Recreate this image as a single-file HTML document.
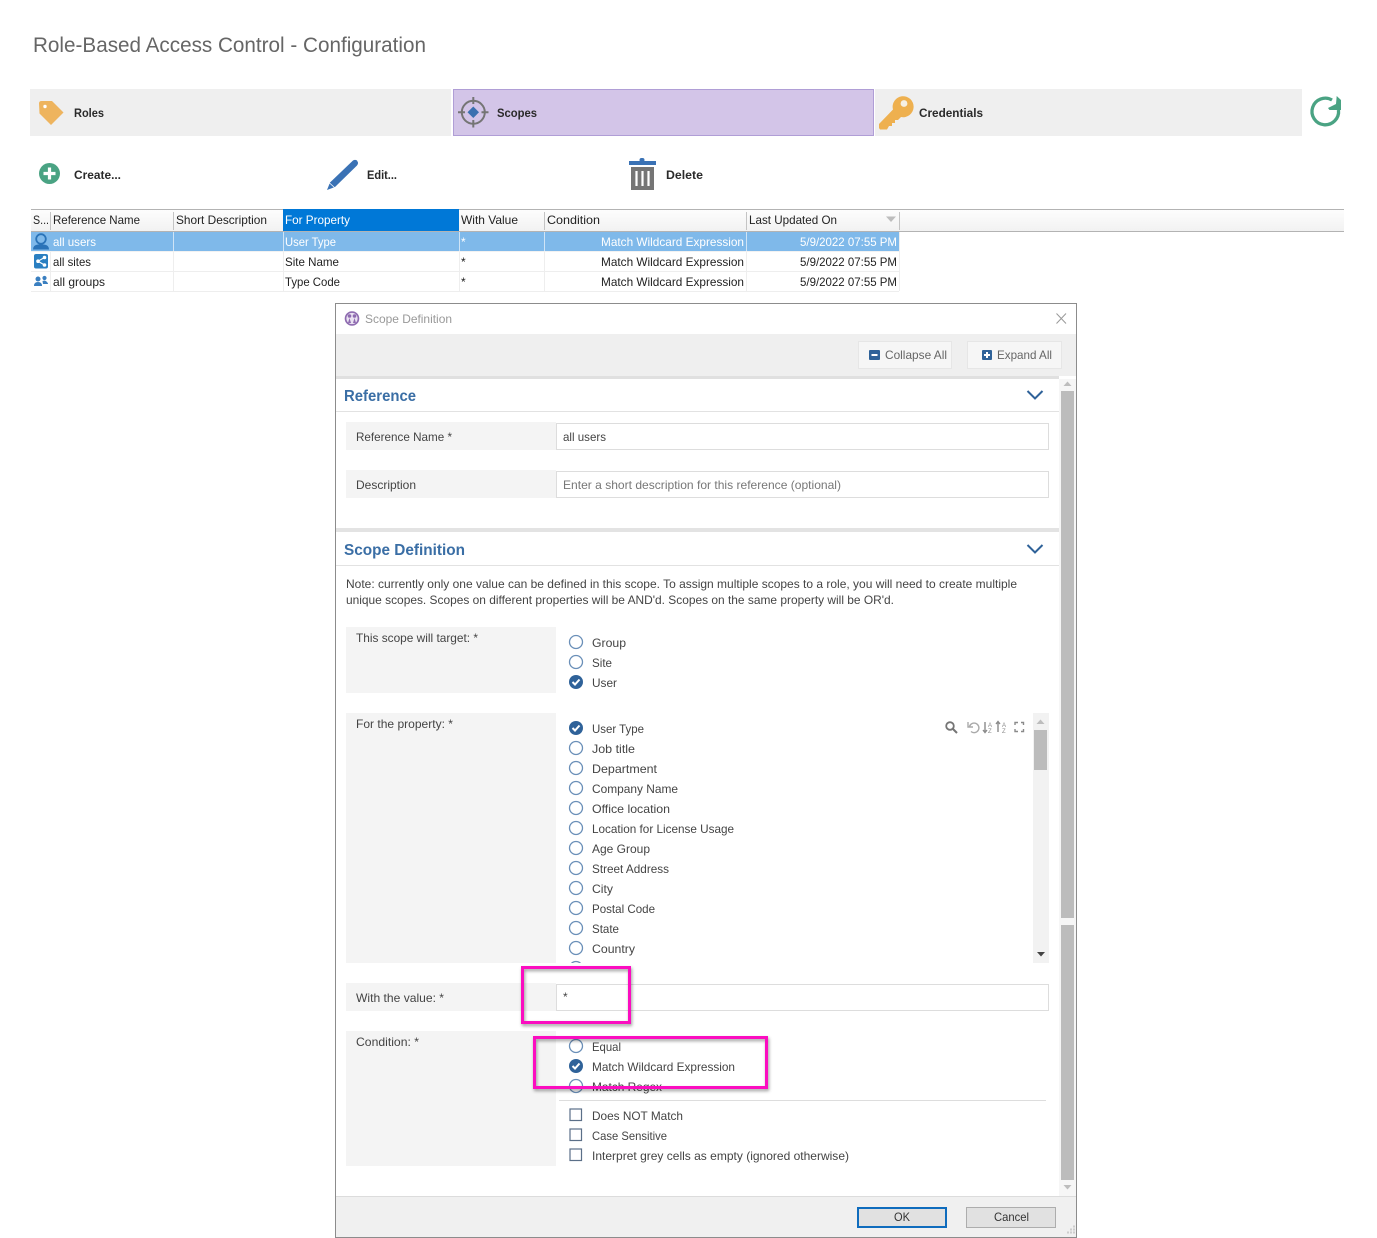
<!DOCTYPE html>
<html><head><meta charset="utf-8"><title>Role-Based Access Control - Configuration</title>
<style>
html,body{margin:0;padding:0;background:#fff;width:1377px;height:1238px;overflow:hidden}
svg{display:block}
text{font-family:"Liberation Sans",sans-serif;font-size:12px;fill:#444;white-space:pre}
.t{fill:#222}
.w{fill:#fff}
.b{font-weight:bold;fill:#2a2a2a;font-size:12px}
.h{font-size:16px;font-weight:bold;fill:#3a6ea5}
.r{fill:none;stroke:#6a8fb8;stroke-width:1.3}
.c{fill:#2f6299}
.k{fill:none;stroke:#fff;stroke-width:2}
.x{fill:none;stroke:#5b6f88;stroke-width:1.2}
.g{fill:none;stroke:#8a8a8a;stroke-width:1.4}
</style></head><body>
<svg width="1377" height="1238" viewBox="0 0 1377 1238" xmlns="http://www.w3.org/2000/svg">
<defs>
<linearGradient id="hd" x1="0" y1="0" x2="0" y2="1"><stop offset="0" stop-color="#fdfdfd"/><stop offset="1" stop-color="#f2f2f2"/></linearGradient>
<filter id="sh" x="-10%" y="-10%" width="120%" height="125%"><feDropShadow dx="1" dy="2" stdDeviation="1.6" flood-color="#000" flood-opacity=".4"/></filter>
<clipPath id="pl"><rect x="560" y="713" width="300" height="250"/></clipPath>
</defs>

<text x="33" y="52" textLength="393" lengthAdjust="spacingAndGlyphs" style="font-size:21.5px;fill:#666">Role-Based Access Control - Configuration</text>

<!-- tabs -->
<rect x="30" y="89" width="421" height="47" fill="#efefef"/>
<rect x="453.500" y="89.500" width="420" height="46" fill="#d3c5e8" stroke="#b09ed6"/>
<rect x="875" y="89" width="427" height="47" fill="#efefef"/>
<path d="M39 103.500Q39 101 41.500 101H52L63.500 112.500 51 125 39.500 113.500Z" fill="#eeb45e"/><circle cx="45" cy="106.500" r="1.700" fill="#fff"/>
<text class="b" x="74" y="117" textLength="30" lengthAdjust="spacingAndGlyphs">Roles</text>
<circle cx="473.300" cy="112.300" r="11.500" fill="none" stroke="#757575" stroke-width="2"/>
<path d="M473.300 97V104M473.300 120V127.500M458 112.300H465M481.500 112.300H488.500" stroke="#757575" stroke-width="2" fill="none"/>
<path d="M473.300 106.500L479 112.300 473.300 118 467.500 112.300Z" fill="#3a70b0"/>
<text class="b" x="497" y="117" textLength="40" lengthAdjust="spacingAndGlyphs">Scopes</text>
<path d="M879 128V124L893 109.500A10.500 10.500 0 1 1 901 117L898 120H895V123H892V126H889L887 129.500H880Z" fill="#eeb04f"/><circle cx="904" cy="103.500" r="3.400" fill="#f6f0e4"/>
<text class="b" x="919" y="117" textLength="64" lengthAdjust="spacingAndGlyphs">Credentials</text>
<path d="M1338.500 110A13.300 13.300 0 1 1 1332 100" fill="none" stroke="#4aa383" stroke-width="3.300"/>
<path d="M1336.700 96L1341 100V110H1329.500L1328 108 1336 104Z" fill="#4aa383"/>

<!-- actions -->
<circle cx="49.500" cy="173.500" r="10.500" fill="#4aa383"/><path d="M49.500 167.500V179.500M43.500 173.500H55.500" stroke="#fff" stroke-width="3.200"/>
<text class="b" x="74" y="179" textLength="47" lengthAdjust="spacingAndGlyphs">Create...</text>
<path d="M327 190L330 182.500 353 160.500Q355 159.300 357 160.500L358 162.500Q358.300 164 357 165.500L335 187Z" fill="#3a72b5"/><path d="M329.500 183L334.500 187.500" stroke="#fff" stroke-width=".8"/>
<text class="b" x="367" y="179" textLength="30" lengthAdjust="spacingAndGlyphs">Edit...</text>
<rect x="629" y="161" width="27" height="4" fill="#3a72b5"/><rect x="639.500" y="158" width="5" height="4" rx="2" fill="#3a72b5"/>
<rect x="631" y="167" width="23" height="23" fill="#757575"/><path d="M636.500 171V186M642.500 171V186M648.500 171V186" stroke="#fff" stroke-width="2.200"/>
<text class="b" x="666" y="179" textLength="37" lengthAdjust="spacingAndGlyphs">Delete</text>

<!-- table -->
<rect x="31" y="210" width="1313" height="21" fill="url(#hd)"/>
<path d="M31 209.500H1344M31 231.500H1344" stroke="#b3b3b3"/>
<rect x="283" y="209" width="176" height="22" fill="#0078d7"/>
<path d="M50.500 212V230M173.500 212V230M544.500 212V230M746.500 212V230M899.500 212V230" stroke="#c4c4c4"/>
<rect x="31" y="232" width="868" height="19" fill="#7fb9ea"/>
<path d="M31 271.500H899M31 291.500H899" stroke="#eee"/><path d="M31 251.500H899" stroke="#f2f2f2"/>
<path d="M50.500 252V291M173.500 252V291M283.500 252V291M459.500 252V291M544.500 252V291M746.500 252V291M899.500 232V291" stroke="#eee"/>
<path d="M173.500 232V251M283.500 232V251M459.500 232V251M544.500 232V251M746.500 232V251" stroke="#cfe4f6"/>
<path d="M886 216.500H896L891 222Z" fill="#bdbdbd"/>
<text class="t" x="33" y="224" textLength="16" lengthAdjust="spacingAndGlyphs">S...</text>
<text class="t" x="53" y="224" textLength="87" lengthAdjust="spacingAndGlyphs">Reference Name</text>
<text class="t" x="176" y="224" textLength="91" lengthAdjust="spacingAndGlyphs">Short Description</text>
<text class="w" x="285" y="224" textLength="65" lengthAdjust="spacingAndGlyphs">For Property</text>
<text class="t" x="461" y="224" textLength="57" lengthAdjust="spacingAndGlyphs">With Value</text>
<text class="t" x="547" y="224" textLength="53" lengthAdjust="spacingAndGlyphs">Condition</text>
<text class="t" x="749" y="224" textLength="88" lengthAdjust="spacingAndGlyphs">Last Updated On</text>

<text class="w" x="53" y="246" textLength="43" lengthAdjust="spacingAndGlyphs">all users</text>
<text class="w" x="285" y="246" textLength="51" lengthAdjust="spacingAndGlyphs">User Type</text>
<text class="w" x="461" y="246">*</text>
<text class="w" x="601" y="246" textLength="143" lengthAdjust="spacingAndGlyphs">Match Wildcard Expression</text>
<text class="w" x="800" y="246" textLength="97" lengthAdjust="spacingAndGlyphs">5/9/2022 07:55 PM</text>
<text class="t" x="53" y="266" textLength="38" lengthAdjust="spacingAndGlyphs">all sites</text>
<text class="t" x="285" y="266" textLength="54" lengthAdjust="spacingAndGlyphs">Site Name</text>
<text class="t" x="461" y="266">*</text>
<text class="t" x="601" y="266" textLength="143" lengthAdjust="spacingAndGlyphs">Match Wildcard Expression</text>
<text class="t" x="800" y="266" textLength="97" lengthAdjust="spacingAndGlyphs">5/9/2022 07:55 PM</text>
<text class="t" x="53" y="286" textLength="52" lengthAdjust="spacingAndGlyphs">all groups</text>
<text class="t" x="285" y="286" textLength="55" lengthAdjust="spacingAndGlyphs">Type Code</text>
<text class="t" x="461" y="286">*</text>
<text class="t" x="601" y="286" textLength="143" lengthAdjust="spacingAndGlyphs">Match Wildcard Expression</text>
<text class="t" x="800" y="286" textLength="97" lengthAdjust="spacingAndGlyphs">5/9/2022 07:55 PM</text>
<!-- row icons -->
<circle cx="41" cy="239" r="4.800" fill="none" stroke="#2a73b8" stroke-width="1.800"/>
<path d="M33 249.500Q33 245 38 244.500H44Q49 245 49 249.500Z" fill="#2a73b8"/>
<rect x="34" y="254" width="14" height="14.500" rx="2" fill="#2a7fc1"/>
<path d="M44.500 257.500L38 261.200 44.500 265" stroke="#fff" stroke-width="1.100" fill="none"/><circle cx="44.500" cy="257.500" r="1.800" fill="#fff"/><circle cx="38" cy="261.200" r="1.800" fill="#fff"/><circle cx="44.500" cy="265" r="1.800" fill="#fff"/>
<circle cx="38" cy="279" r="2.500" fill="#3a7fc0"/><path d="M34 286Q34 282 38 282T42 286Z" fill="#3a7fc0"/>
<circle cx="44.500" cy="278" r="2.100" fill="#3a7fc0"/><path d="M42.500 281Q46 279.500 48 283.500V284H43Z" fill="#3a7fc0"/>

<!-- dialog -->
<rect x="335.500" y="303.500" width="741" height="934" fill="#fff" stroke="#8c8c8c"/>
<rect x="336" y="334" width="740" height="42" fill="#efefef"/>
<rect x="336" y="376" width="723" height="3" fill="#e0e0e0"/>
<circle cx="352" cy="318.500" r="7.300" fill="#8e6bb0"/>
<circle cx="352" cy="318.500" r="5.600" fill="#e9e1f1"/>
<circle cx="349.500" cy="316" r="1.800" fill="#8e6bb0"/><circle cx="354.500" cy="316" r="1.800" fill="#8e6bb0"/><path d="M348 323L349.500 318 351 323ZM353 323L354.500 318 356 323Z" fill="#8e6bb0"/>
<text x="365" y="323" textLength="87" lengthAdjust="spacingAndGlyphs" style="fill:#999">Scope Definition</text>
<path d="M1056.500 313.500L1066 323.500M1066 313.500L1056.500 323.500" stroke="#999" fill="none"/>
<rect x="858.500" y="341.500" width="93" height="27" fill="#f6f6f6" stroke="#e6e6e6"/>
<rect x="967.500" y="341.500" width="94" height="27" fill="#f6f6f6" stroke="#e6e6e6"/>
<rect x="869" y="350" width="11" height="10" rx="1" fill="#2f6299"/><path d="M871.500 355H877.500" stroke="#fff" stroke-width="2"/>
<rect x="982" y="350" width="10" height="10" rx="1" fill="#2f6299"/><path d="M984 355H990M987 352V358" stroke="#fff" stroke-width="2"/>
<text x="885" y="359" textLength="62" lengthAdjust="spacingAndGlyphs" style="fill:#666">Collapse All</text>
<text x="997" y="359" textLength="55" lengthAdjust="spacingAndGlyphs" style="fill:#666">Expand All</text>

<!-- main scrollbar -->
<rect x="1059" y="379" width="17" height="817" fill="#f6f6f6"/>
<rect x="1061" y="391" width="13" height="527" fill="#bcbcbc"/>
<rect x="1061" y="925" width="13" height="255" fill="#bcbcbc"/>
<path d="M1063.500 386H1071.500L1067.500 381.500Z" fill="#bdbdbd"/><path d="M1063.500 1185H1071.500L1067.500 1189.500Z" fill="#bdbdbd"/>

<!-- reference section -->
<text class="h" x="344" y="401" textLength="72" lengthAdjust="spacingAndGlyphs">Reference</text>
<path d="M1027.500 391L1035 398.500 1042.500 391" fill="none" stroke="#2f6299" stroke-width="2"/>
<path d="M336 411.500H1059" stroke="#e2e2e2"/>
<rect x="346" y="422" width="210" height="28" fill="#f4f4f4"/>
<rect x="556.500" y="423.500" width="492" height="26" fill="#fff" stroke="#ddd"/>
<text x="356" y="441" textLength="96" lengthAdjust="spacingAndGlyphs">Reference Name *</text>
<text x="563" y="441" textLength="43" lengthAdjust="spacingAndGlyphs">all users</text>
<rect x="346" y="470" width="210" height="28" fill="#f4f4f4"/>
<rect x="556.500" y="471.500" width="492" height="26" fill="#fff" stroke="#ddd"/>
<text x="356" y="489" textLength="60" lengthAdjust="spacingAndGlyphs">Description</text>
<text x="563" y="489" textLength="278" lengthAdjust="spacingAndGlyphs" style="fill:#777">Enter a short description for this reference (optional)</text>

<!-- scope section -->
<rect x="336" y="528" width="723" height="4" fill="#e3e3e3"/>
<text class="h" x="344" y="555" textLength="121" lengthAdjust="spacingAndGlyphs">Scope Definition</text>
<path d="M1027.500 545L1035 552.500 1042.500 545" fill="none" stroke="#2f6299" stroke-width="2"/>
<path d="M336 565.500H1059" stroke="#e2e2e2"/>
<text x="346" y="588" textLength="671" lengthAdjust="spacingAndGlyphs">Note: currently only one value can be defined in this scope. To assign multiple scopes to a role, you will need to create multiple</text>
<text x="346" y="604" textLength="548" lengthAdjust="spacingAndGlyphs">unique scopes. Scopes on different properties will be AND'd. Scopes on the same property will be OR'd.</text>

<rect x="346" y="627" width="210" height="66" fill="#f4f4f4"/>
<text x="356" y="642" textLength="122" lengthAdjust="spacingAndGlyphs">This scope will target: *</text>
<circle class="r" cx="576" cy="642" r="6.500"/><text x="592" y="647" textLength="34" lengthAdjust="spacingAndGlyphs">Group</text>
<circle class="r" cx="576" cy="662" r="6.500"/><text x="592" y="667" textLength="20" lengthAdjust="spacingAndGlyphs">Site</text>
<circle class="c" cx="576" cy="682" r="7"/><path class="k" d="M572.500 682L575 684.500 579.500 679.500"/><text x="592" y="687" textLength="25" lengthAdjust="spacingAndGlyphs">User</text>

<rect x="346" y="713" width="210" height="250" fill="#f4f4f4"/>
<text x="356" y="728" textLength="97" lengthAdjust="spacingAndGlyphs">For the property: *</text>
<circle class="c" cx="576" cy="728" r="7"/><path class="k" d="M572.500 728L575 730.500 579.500 725.500"/><text x="592" y="733" textLength="52" lengthAdjust="spacingAndGlyphs">User Type</text>
<circle class="r" cx="576" cy="748" r="6.500"/><text x="592" y="753" textLength="43" lengthAdjust="spacingAndGlyphs">Job title</text>
<circle class="r" cx="576" cy="768" r="6.500"/><text x="592" y="773" textLength="65" lengthAdjust="spacingAndGlyphs">Department</text>
<circle class="r" cx="576" cy="788" r="6.500"/><text x="592" y="793" textLength="86" lengthAdjust="spacingAndGlyphs">Company Name</text>
<circle class="r" cx="576" cy="808" r="6.500"/><text x="592" y="813" textLength="78" lengthAdjust="spacingAndGlyphs">Office location</text>
<circle class="r" cx="576" cy="828" r="6.500"/><text x="592" y="833" textLength="142" lengthAdjust="spacingAndGlyphs">Location for License Usage</text>
<circle class="r" cx="576" cy="848" r="6.500"/><text x="592" y="853" textLength="58" lengthAdjust="spacingAndGlyphs">Age Group</text>
<circle class="r" cx="576" cy="868" r="6.500"/><text x="592" y="873" textLength="77" lengthAdjust="spacingAndGlyphs">Street Address</text>
<circle class="r" cx="576" cy="888" r="6.500"/><text x="592" y="893" textLength="21" lengthAdjust="spacingAndGlyphs">City</text>
<circle class="r" cx="576" cy="908" r="6.500"/><text x="592" y="913" textLength="63" lengthAdjust="spacingAndGlyphs">Postal Code</text>
<circle class="r" cx="576" cy="928" r="6.500"/><text x="592" y="933" textLength="27" lengthAdjust="spacingAndGlyphs">State</text>
<circle class="r" cx="576" cy="948" r="6.500"/><text x="592" y="953" textLength="43" lengthAdjust="spacingAndGlyphs">Country</text>
<circle class="r" cx="576" cy="968" r="6.500" clip-path="url(#pl)"/>

<!-- list tools -->
<circle class="g" cx="950" cy="726" r="3.800" style="stroke:#757575;stroke-width:1.800"/><path d="M953 729L957 733" stroke="#757575" stroke-width="2"/>
<path class="g" d="M969.500 726.500A4.800 4.800 0 1 1 971 731.500M968 722V727H973" style="stroke:#aaa"/>
<path class="g" d="M985 722V732M983 730L985 732.500 987 730"/><path class="g" d="M998 732V722M996 724L998 721.500 1000 724"/>
<text x="988" y="727" style="font-size:6px;fill:#8a8a8a">A</text><text x="988" y="733" style="font-size:6px;fill:#8a8a8a">Z</text>
<text x="1002" y="727" style="font-size:6px;fill:#8a8a8a">A</text><text x="1002" y="733" style="font-size:6px;fill:#8a8a8a">Z</text>
<path class="g" d="M1015 725V722.500H1018M1021 722.500H1023.500V725M1023.500 729V731.500H1021M1018 731.500H1015V729"/>
<rect x="1033" y="713" width="16" height="250" fill="#f2f2f2"/>
<rect x="1034" y="730" width="13" height="40" fill="#bcbcbc"/>
<path d="M1036.500 724H1044.500L1040.500 719.500Z" fill="#bdbdbd"/><path d="M1037 952H1045L1041 956.500Z" fill="#444"/>

<rect x="346" y="983" width="210" height="28" fill="#f4f4f4"/>
<rect x="556.500" y="984.500" width="492" height="26" fill="#fff" stroke="#ddd"/>
<text x="356" y="1002" textLength="88" lengthAdjust="spacingAndGlyphs">With the value: *</text>
<text x="563" y="1001">*</text>

<rect x="346" y="1031" width="210" height="135" fill="#f4f4f4"/>
<text x="356" y="1046" textLength="63" lengthAdjust="spacingAndGlyphs">Condition: *</text>
<circle class="r" cx="576" cy="1046" r="6.500"/><text x="592" y="1051" textLength="29" lengthAdjust="spacingAndGlyphs">Equal</text>
<circle class="c" cx="576" cy="1066" r="7"/><path class="k" d="M572.500 1066L575 1068.500 579.500 1063.500"/><text x="592" y="1071" textLength="143" lengthAdjust="spacingAndGlyphs">Match Wildcard Expression</text>
<circle class="r" cx="576" cy="1086" r="6.500"/><text x="592" y="1091" textLength="70" lengthAdjust="spacingAndGlyphs">Match Regex</text>
<path d="M559 1100.500H1046" stroke="#ddd"/>
<rect class="x" x="570" y="1109" width="11.500" height="11.500"/><text x="592" y="1120" textLength="91" lengthAdjust="spacingAndGlyphs">Does NOT Match</text>
<rect class="x" x="570" y="1129" width="11.500" height="11.500"/><text x="592" y="1140" textLength="75" lengthAdjust="spacingAndGlyphs">Case Sensitive</text>
<rect class="x" x="570" y="1149" width="11.500" height="11.500"/><text x="592" y="1160" textLength="257" lengthAdjust="spacingAndGlyphs">Interpret grey cells as empty (ignored otherwise)</text>

<!-- footer -->
<rect x="336" y="1196" width="740" height="41" fill="#f0f0f0"/>
<path d="M336 1196.500H1076" stroke="#dcdcdc"/>
<rect x="858" y="1208" width="88" height="19" fill="#e1e1e1" stroke="#0f6cbd" stroke-width="2"/>
<rect x="966.500" y="1207.500" width="89" height="20" fill="#e1e1e1" stroke="#adadad"/>
<text x="894" y="1221" textLength="16" lengthAdjust="spacingAndGlyphs" style="fill:#333">OK</text>
<text x="994" y="1221" textLength="35" lengthAdjust="spacingAndGlyphs" style="fill:#333">Cancel</text>
<path d="M1073.500 1226.500h1M1070.500 1229.500h1M1073.500 1229.500h1M1067.500 1232.500h1M1070.500 1232.500h1M1073.500 1232.500h1" stroke="#aaa" stroke-width="2"/>

<!-- highlights -->
<rect x="522.500" y="967.500" width="107" height="55" fill="none" stroke="#fb0fc0" stroke-width="3" filter="url(#sh)"/>
<rect x="534.500" y="1037.500" width="232" height="50" fill="none" stroke="#fb0fc0" stroke-width="3" filter="url(#sh)"/>
</svg>
</body></html>
